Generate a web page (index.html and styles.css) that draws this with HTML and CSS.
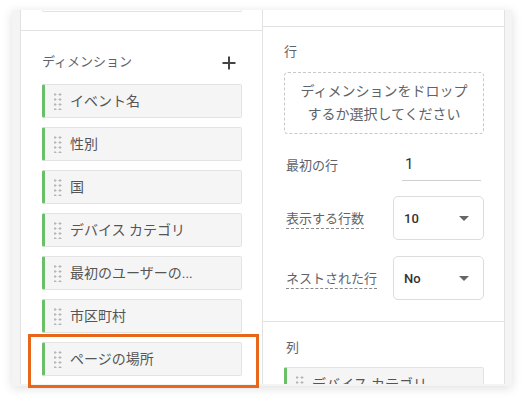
FILE: index.html
```html
<!DOCTYPE html>
<html lang="ja">
<head>
<meta charset="utf-8">
<link rel="stylesheet" href="styles.css">
</head>
<body>
<div class="frame">
  <div class="panel left">
    <div class="top-section"><div class="topbox"></div></div>
    <div class="dims">
      <div class="dims-head">
        <span class="label">ディメンション</span>
        <svg class="plus" width="16" height="16" viewBox="0 0 16 16"><path d="M8 1.5v13M1.5 8h13" stroke="#444" stroke-width="2" fill="none"/></svg>
      </div>
      <div class="chip"><span class="handle"></span><span class="chip-text">イベント名</span></div>
      <div class="chip"><span class="handle"></span><span class="chip-text">性別</span></div>
      <div class="chip"><span class="handle"></span><span class="chip-text">国</span></div>
      <div class="chip"><span class="handle"></span><span class="chip-text">デバイス カテゴリ</span></div>
      <div class="chip"><span class="handle"></span><span class="chip-text">最初のユーザーの...</span></div>
      <div class="chip"><span class="handle"></span><span class="chip-text">市区町村</span></div>
      <div class="chip"><span class="handle"></span><span class="chip-text">ページの場所</span></div>
    </div>
  </div>
  <div class="panel right">
    <div class="top-section short"></div>
    <div class="rows">
      <div class="label">行</div>
      <div class="dropzone">ディメンションをドロップ<br>するか選択してください</div>
      <div class="field first">
        <span class="label">最初の行</span>
        <span class="num-input">1</span>
      </div>
      <div class="field">
        <span class="label dashed">表示する行数</span>
        <div class="select"><span>10</span><span class="caret"></span></div>
      </div>
      <div class="field nest">
        <span class="label dashed">ネストされた行</span>
        <div class="select"><span>No</span><span class="caret"></span></div>
      </div>
    </div>
    <div class="cols">
      <div class="label">列</div>
      <div class="chip wide"><span class="handle"></span><span class="chip-text">デバイス カテゴリ</span></div>
    </div>
  </div>
</div>
<div class="highlight"></div>
</body>
</html>
```

FILE: styles.css
```css
* { box-sizing: border-box; }
html, body { margin: 0; padding: 0; background: #fff; }
body {
  font-family: Roboto, "Noto Sans CJK JP", sans-serif;
  width: 524px;
  height: 400px;
  overflow: hidden;
  position: relative;
}
.frame {
  margin: 10px 0 0 12px;
  width: 500px;
  height: 376px;
  background: #f4f4f4;
  box-shadow: 0 2px 10px rgba(0,0,0,0.13);
  display: flex;
  padding-left: 8px;
  overflow: hidden;
}
.panel {
  background: #fff;
  height: 374px;
  border-right: 1px solid #e2e2e2;
}
.left {
  width: 243px;
  border-left: 1px solid #e2e2e2;
}
.right {
  width: 242px;
  overflow: hidden;
}
.top-section {
  height: 21px;
  border-bottom: 1px solid #e2e2e2;
  padding-left: 21px;
}
.top-section.short { height: 17px; }
.topbox {
  width: 200px;
  height: 2px;
  border: 1px solid #e2e2e2;
  border-top: none;
  border-radius: 0 0 3px 3px;
}
.label {
  font-size: 13px;
  color: #5f6368;
  line-height: 20px;
}
.dims { padding: 21px 20px 0 21px; }
.dims-head {
  display: flex;
  justify-content: space-between;
  align-items: center;
  height: 20px;
  margin-bottom: 12px;
}
.plus { margin-right: 5px; margin-top: 1px; }
.chip {
  height: 34px;
  margin-bottom: 9px;
  background: #f5f5f5;
  border: 1px solid #e3e3e3;
  border-left: 3px solid #6abf69;
  border-radius: 2px;
  display: flex;
  align-items: center;
  padding-left: 9px;
}
.handle {
  width: 8px;
  height: 17px;
  margin-right: 8px;
  background-image: radial-gradient(circle, #b5b5b5 1px, transparent 1.2px);
  background-size: 5px 5px;
  background-position: -1.5px -1px;
}
.chip-text {
  font-size: 14px;
  color: #555;
  line-height: 20px;
  white-space: nowrap;
}
.rows {
  padding: 15px 20px 0 21px;
  height: 295px;
  border-bottom: 1px solid #e2e2e2;
}
.dropzone {
  margin-top: 10px;
  height: 62px;
  border: 1px dashed #c8c8c8;
  border-radius: 4px;
  text-align: center;
  font-size: 14px;
  line-height: 23px;
  color: #5f6368;
  padding-top: 7px;
}
.field {
  display: flex;
  align-items: center;
  justify-content: space-between;
  margin-top: 16px;
  height: 44px;
}
.field.first {
  margin-top: 22px;
  height: 24px;
  align-items: flex-start;
}
.field.first .label { margin-left: 2px; }
.num-input {
  width: 76px;
  height: 16px;
  border-bottom: 1px solid #cfcfcf;
  margin-right: 3px;
  box-sizing: content-box;
  padding: 0 0 8px 3px;
  font-size: 15px;
  line-height: 16px;
  color: #333;
}
.label.dashed {
  border-bottom: 1px dashed #8a8a8a;
  line-height: 18px;
  margin-top: 2px;
  margin-left: 2px;
}
.select {
  width: 91px;
  height: 44px;
  border: 1px solid #dcdcdc;
  border-radius: 5px;
  display: flex;
  align-items: center;
  justify-content: space-between;
  padding: 0 14px 0 10px;
  font-size: 13px;
  font-weight: 500;
  color: #333;
}
.field.nest { margin-top: 16px; }
.caret {
  width: 0;
  height: 0;
  border-left: 5px solid transparent;
  border-right: 5px solid transparent;
  border-top: 5px solid #666;
}
.cols { padding: 16px 20px 0 21px; }
.cols .label { margin-left: 2px; }
.chip.wide { margin-top: 9px; }
.highlight {
  position: absolute;
  left: 28px;
  top: 334px;
  width: 231px;
  height: 54px;
  border: 3px solid #e8661a;
}
```
